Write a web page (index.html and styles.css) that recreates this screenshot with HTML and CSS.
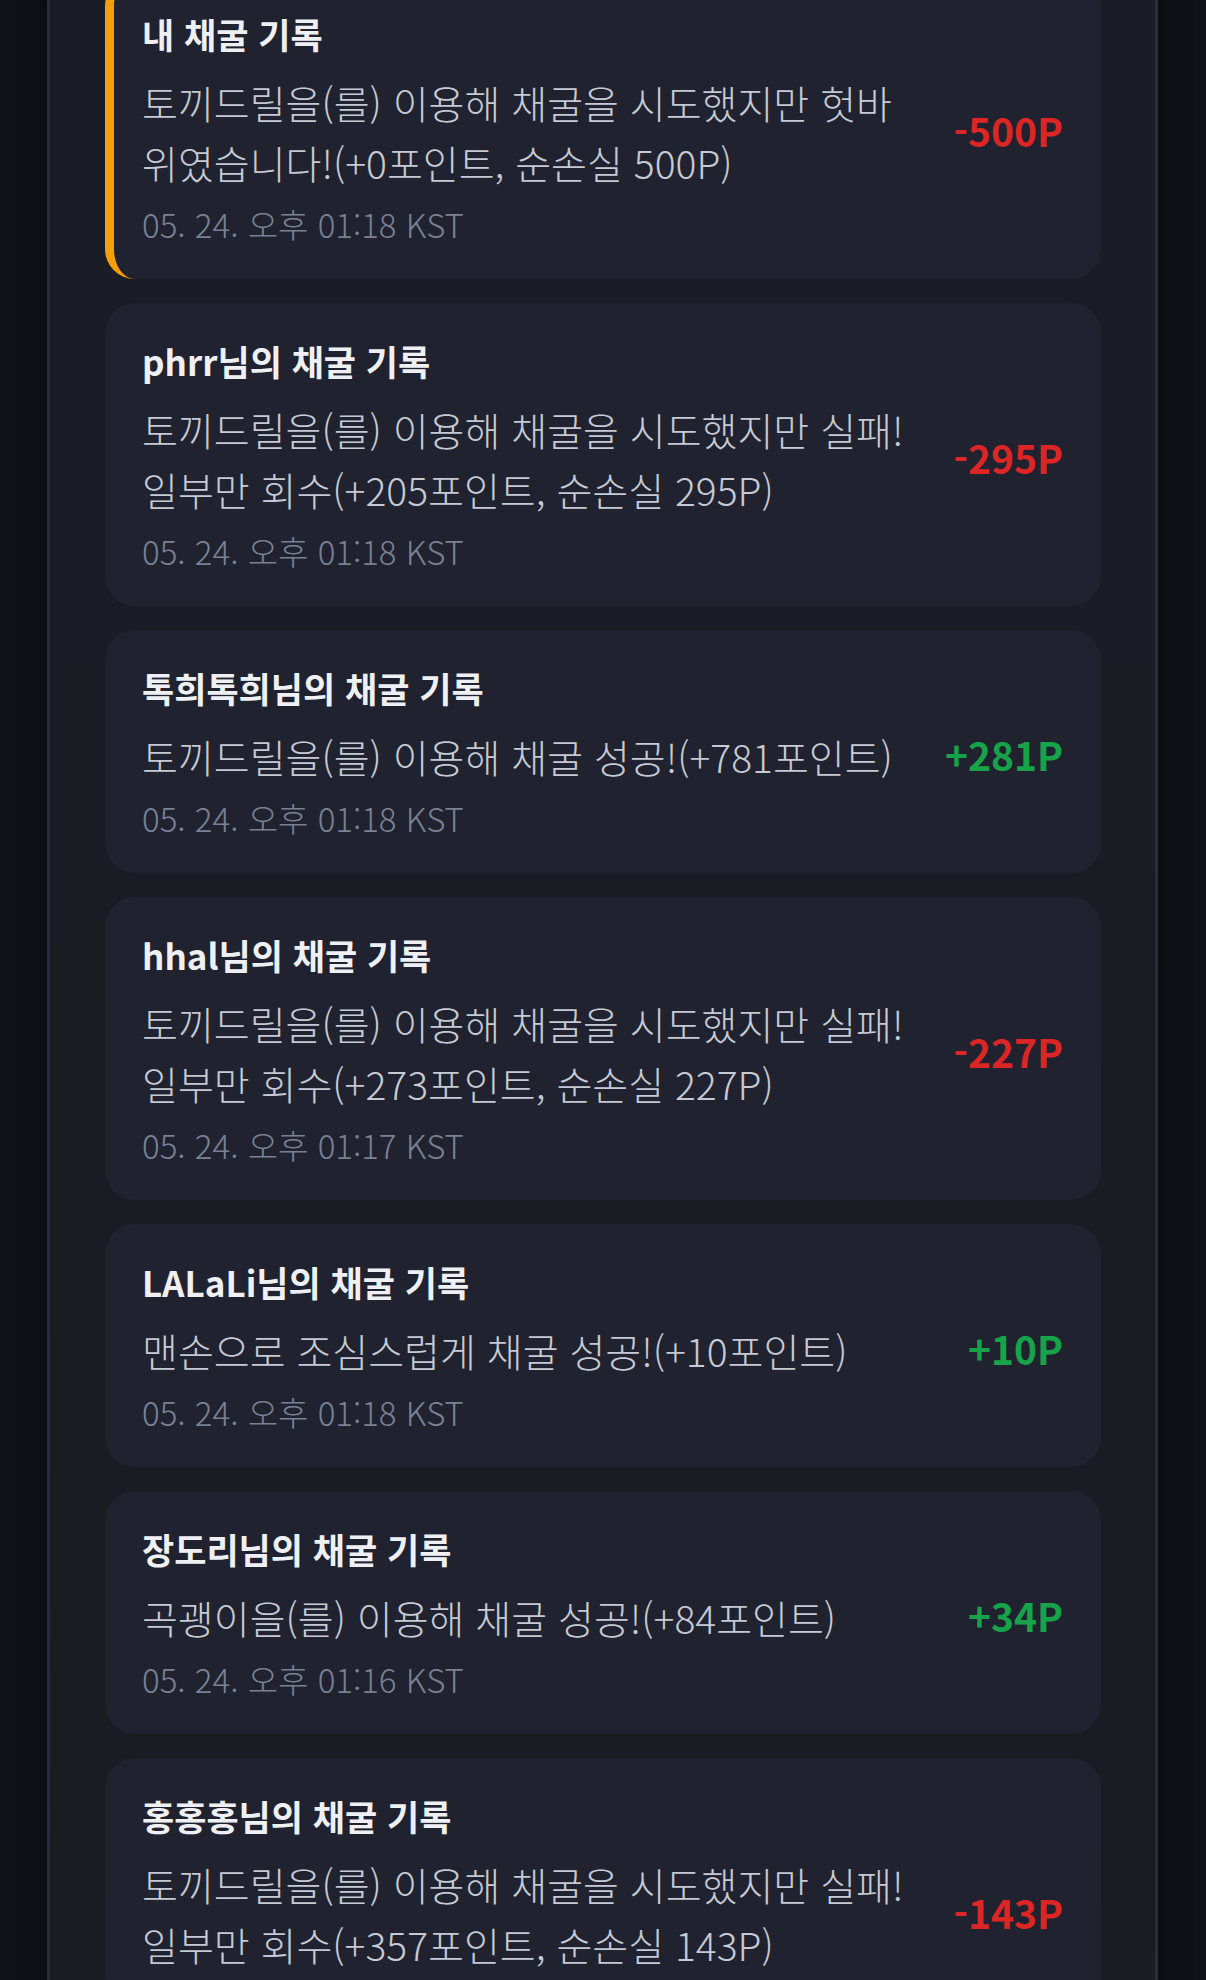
FILE: index.html
```html
<!DOCTYPE html>
<html lang="ko">
<head>
<meta charset="utf-8">
<link rel="stylesheet" href="styles.css">
</head>
<body>
<div class="page">
  <div class="list">
    <div class="card card-mine">
      <div class="info">
        <div class="title">내 채굴 기록</div>
        <div class="desc">토끼드릴을(를) 이용해 채굴을 시도했지만 헛바위였습니다!(+0포인트, 순손실 500P)</div>
        <div class="time">05. 24. 오후 01:18 KST</div>
      </div>
      <div class="amount loss">-500P</div>
    </div>
    <div class="card">
      <div class="info">
        <div class="title">phrr님의 채굴 기록</div>
        <div class="desc">토끼드릴을(를) 이용해 채굴을 시도했지만 실패! 일부만 회수(+205포인트, 순손실 295P)</div>
        <div class="time">05. 24. 오후 01:18 KST</div>
      </div>
      <div class="amount loss">-295P</div>
    </div>
    <div class="card">
      <div class="info">
        <div class="title">톡희톡희님의 채굴 기록</div>
        <div class="desc">토끼드릴을(를) 이용해 채굴 성공!(+781포인트)</div>
        <div class="time">05. 24. 오후 01:18 KST</div>
      </div>
      <div class="amount gain">+281P</div>
    </div>
    <div class="card">
      <div class="info">
        <div class="title">hhal님의 채굴 기록</div>
        <div class="desc">토끼드릴을(를) 이용해 채굴을 시도했지만 실패! 일부만 회수(+273포인트, 순손실 227P)</div>
        <div class="time">05. 24. 오후 01:17 KST</div>
      </div>
      <div class="amount loss">-227P</div>
    </div>
    <div class="card">
      <div class="info">
        <div class="title">LALaLi님의 채굴 기록</div>
        <div class="desc">맨손으로 조심스럽게 채굴 성공!(+10포인트)</div>
        <div class="time">05. 24. 오후 01:18 KST</div>
      </div>
      <div class="amount gain">+10P</div>
    </div>
    <div class="card">
      <div class="info">
        <div class="title">장도리님의 채굴 기록</div>
        <div class="desc">곡괭이을(를) 이용해 채굴 성공!(+84포인트)</div>
        <div class="time">05. 24. 오후 01:16 KST</div>
      </div>
      <div class="amount gain">+34P</div>
    </div>
    <div class="card">
      <div class="info">
        <div class="title">홍홍홍님의 채굴 기록</div>
        <div class="desc">토끼드릴을(를) 이용해 채굴을 시도했지만 실패! 일부만 회수(+357포인트, 순손실 143P)</div>
        <div class="time">05. 24. 오후 01:18 KST</div>
      </div>
      <div class="amount loss">-143P</div>
    </div>
  </div>
</div>
</body>
</html>
```

FILE: styles.css
```css
html, body {
  margin: 0;
  padding: 0;
  background: #101217;
  height: 1980px;
  overflow: hidden;
  font-family: "Noto Sans CJK KR", "Noto Sans", sans-serif;
}

.page {
  margin: 0 48px 0 47px;
  min-height: 2200px;
  background: linear-gradient(180deg, #1a1d26 0%, #1a1c23 80%, #1c1d22 100%);
  border-left: 3px solid #282e3c;
  border-right: 3px solid #282e3c;
  padding: 0 54px 0 55px;
  box-shadow: 0 0 24px rgba(0, 0, 0, 0.55);
}

.list {
  display: flex;
  flex-direction: column;
  gap: 24px;
  margin-top: -24px;
}

.card {
  display: flex;
  align-items: center;
  gap: 40px;
  background: #20232f;
  border-radius: 30px;
  padding: 34px 38px 35px 37px;
}

.card-mine {
  border-left: 9px solid #f59e0b;
  padding-left: 28px;
}

.info {
  flex: 1;
  min-width: 0;
}

.title {
  font-size: 35px;
  font-weight: 700;
  line-height: 48px;
  color: #eef0f4;
  margin-bottom: 14px;
}

.desc {
  font-size: 39px;
  font-weight: 300;
  line-height: 60px;
  color: #c6cad4;
}

.time {
  font-size: 33px;
  font-weight: 300;
  line-height: 40px;
  color: #7b8194;
  margin-top: 12px;
}

.amount {
  font-size: 39px;
  font-weight: 700;
  white-space: nowrap;
  margin-top: 5px;
}

.loss {
  color: #dc2626;
}

.gain {
  color: #16a34a;
}
```
